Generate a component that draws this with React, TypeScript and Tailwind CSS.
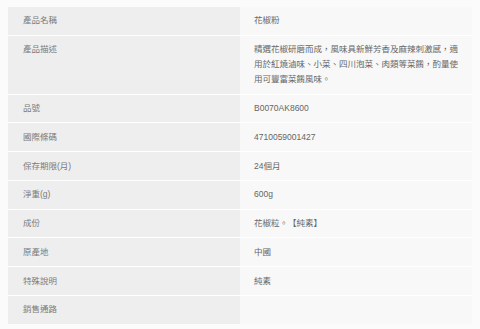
const rows: { label: string; value: React.ReactNode }[] = [
  { label: "產品名稱", value: "花椒粉" },
  {
    label: "產品描述",
    value: (
      <>
        精選花椒研磨而成，風味具新鮮芳香及麻辣刺激感，適
        <br />
        用於紅燒滷味、小菜、四川泡菜、肉類等菜餚，酌量使
        <br />
        用可豐富菜餚風味。
      </>
    ),
  },
  { label: "品號", value: "B0070AK8600" },
  { label: "國際條碼", value: "4710059001427" },
  { label: "保存期限(月)", value: "24個月" },
  { label: "淨重(g)", value: "600g" },
  { label: "成份", value: "花椒粒。【純素】" },
  { label: "原產地", value: "中國" },
  { label: "特殊說明", value: "純素" },
  { label: "銷售通路", value: "" },
];

export default function App() {
  return (
    <div
      className="min-h-[329px] w-[480px] bg-[#fbfbfb] px-[8px] pt-[7px]"
      style={{ fontFamily: '"Liberation Sans", "Noto Sans CJK TC", sans-serif' }}
    >
      <div className="w-[464px]">
        {rows.map((row, i) => (
          <div
            key={row.label}
            className={`grid grid-cols-2 ${i < rows.length - 1 ? "border-b border-white" : ""}`}
          >
            <div className="bg-[#eeeeee] px-[15px] py-[6.4px] text-[8.5px] leading-[15px] text-[#7a7a7a]">
              {row.label}
            </div>
            <div className="whitespace-nowrap bg-[#f8f8f8] px-[14px] py-[6.4px] text-[8.5px] leading-[15px] text-[#666666]">
              {row.value}
            </div>
          </div>
        ))}
      </div>
    </div>
  );
}
